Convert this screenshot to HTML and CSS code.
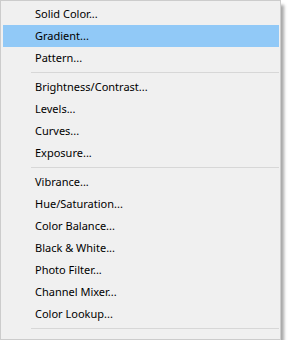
FILE: index.html
```html
<!DOCTYPE html>
<html>
<head>
<meta charset="utf-8">
<link rel="stylesheet" href="styles.css">
</head>
<body>
<div class="menu">
  <div class="item">Solid Color...</div>
  <div class="item active">Gradient...</div>
  <div class="item">Pattern...</div>
  <div class="sep"></div>
  <div class="item">Brightness/Contrast...</div>
  <div class="item">Levels...</div>
  <div class="item">Curves...</div>
  <div class="item">Exposure...</div>
  <div class="sep"></div>
  <div class="item">Vibrance...</div>
  <div class="item">Hue/Saturation...</div>
  <div class="item">Color Balance...</div>
  <div class="item">Black &amp; White...</div>
  <div class="item">Photo Filter...</div>
  <div class="item">Channel Mixer...</div>
  <div class="item">Color Lookup...</div>
  <div class="sep"></div>
  <div class="item">Invert</div>
</div>
</body>
</html>
```
FILE: styles.css
```css
html, body {
  margin: 0;
  padding: 0;
  background: #ffffff;
}
.menu {
  width: 276px;
  height: 336px;
  padding: 2px 1px 0 2px;
  border: 1px solid #cccccc;
  background: #f0f0f0;
  overflow: hidden;
  box-shadow: 4px 4px 3px -1px rgba(0, 0, 0, 0.35);
  font-family: "Noto Sans", "Open Sans", sans-serif;
  font-size: 11px;
  color: #000000;
}
.item {
  height: 22px;
  line-height: 22px;
  padding-left: 32px;
  white-space: nowrap;
}
.item.active {
  background: #91c9f7;
}
.sep {
  height: 1px;
  margin: 3px 0 3px 28px;
  background: #d7d7d7;
}
```
